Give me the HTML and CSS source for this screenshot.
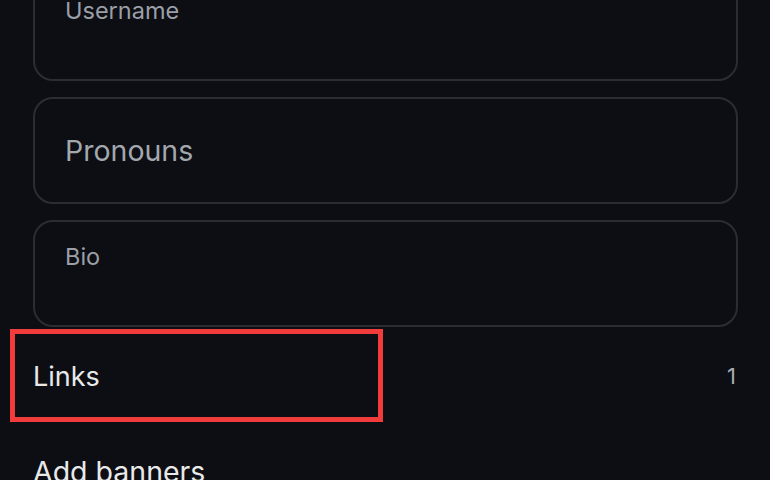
FILE: index.html
```html
<!DOCTYPE html>
<html>
<head>
<meta charset="utf-8">
<link rel="stylesheet" href="styles.css">
</head>
<body>
<div class="page">
  <div class="fields">
    <div class="field field-labeled"><span class="label">Username</span></div>
    <div class="field field-center"><span class="placeholder">Pronouns</span></div>
    <div class="field field-labeled"><span class="label">Bio</span></div>
  </div>
  <div class="row row-links">
    <span class="row-title">Links</span>
    <span class="count">1</span>
    <div class="highlight"></div>
  </div>
  <div class="row row-banners">
    <span class="row-title row-title-lg">Add banners</span>
  </div>
</div>
</body>
</html>
```

FILE: styles.css
```css
html, body {
  margin: 0;
  padding: 0;
  background: #0c0e13;
  width: 770px;
  height: 480px;
  overflow: hidden;
}
body {
  font-family: Inter, "Noto Sans", sans-serif;
}
.page {
  padding: 0 32px 0 33px;
  display: flex;
  flex-direction: column;
}
.fields {
  display: flex;
  flex-direction: column;
  gap: 16px;
  margin-top: -26px;
}
.field {
  box-sizing: border-box;
  height: 107px;
  border: 2px solid #2a2d33;
  border-radius: 20px;
  padding: 0 30px;
  display: flex;
}
.field-labeled {
  align-items: flex-start;
  padding-top: 21px;
}
.field-center {
  align-items: center;
}
.label {
  font-size: 23.5px;
  color: #9b9fa7;
  line-height: 28px;
}
.placeholder {
  font-size: 28.5px;
  color: #a3a7ae;
  line-height: 34px;
}
.row {
  display: flex;
  align-items: center;
  justify-content: space-between;
}
.row-links {
  position: relative;
  height: 92px;
  margin-top: 3px;
}
.row-title {
  font-size: 27px;
  color: #e9e9ea;
}
.row-title-lg {
  font-size: 28.5px;
  line-height: 34px;
}
.count {
  font-size: 22px;
  color: #a9abb0;
  padding-right: 2px;
}
.highlight {
  position: absolute;
  left: -23px;
  top: -1px;
  width: 373px;
  height: 93px;
  box-sizing: border-box;
  border: 5px solid #f23c3c;
}
.row-banners {
  height: 60px;
  align-items: flex-start;
  padding-top: 33px;
}
```
